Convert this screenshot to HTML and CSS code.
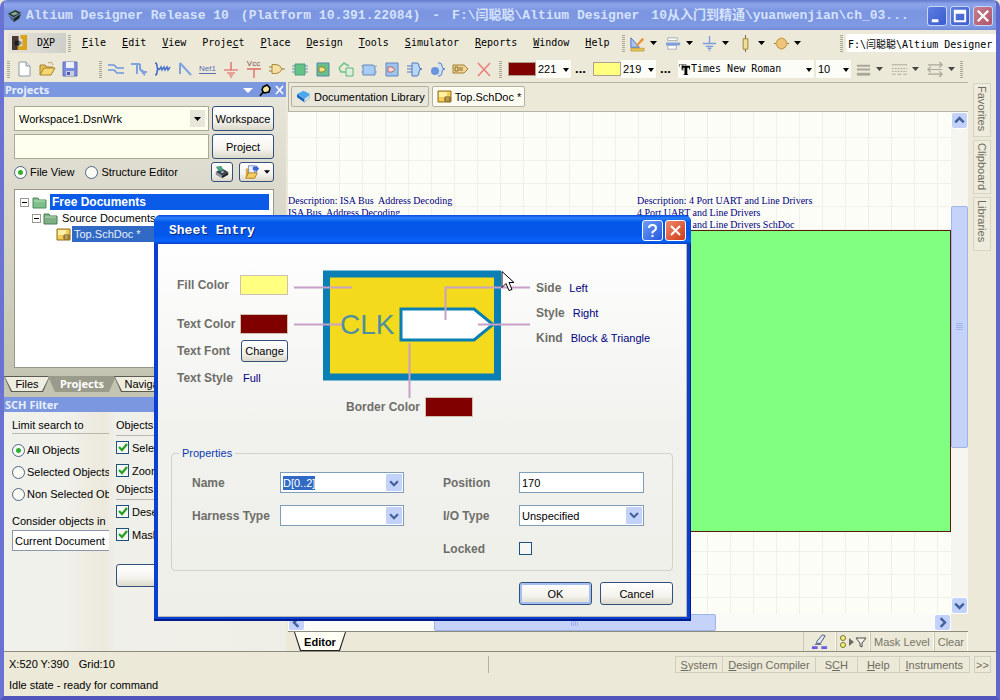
FILE: index.html
```html
<!DOCTYPE html>
<html lang="en">
<head>
<meta charset="utf-8">
<title>Altium Designer Release 10</title>
<link rel="stylesheet" href="styles.css">
</head>
<body>
<div class="window">
  <header class="titlebar">
    <svg class="app-icon" viewBox="0 0 16 16"><path d="M1 5l8-4 6 3-8 5z" fill="#2b3a2c"/><path d="M4 5l5-2 3 2-5 2z" fill="#7fae9c"/><path d="M1 6l6 4-1 3z" fill="#46607a"/><path d="M7 10l8-5-2 5-6 4z" fill="#1d2a20"/></svg>
    <h1 class="title-text"><span>Altium Designer Release 10</span><span>(Platform 10.391.22084)</span><span>-</span><span>F:\闫聪聪\Altium Designer</span><span>10从入门到精通\yuanwenjian\ch_03...</span></h1>
    <div class="caption-buttons">
      <button class="cap" aria-label="Minimize"><svg viewBox="0 0 19 19"><path d="M4 13h7v3H4z" fill="#fff"/></svg></button>
      <button class="cap" aria-label="Maximize"><svg viewBox="0 0 19 19"><path d="M3 3h13v13H3zM5 7h9v7H5z" fill="#fff" fill-rule="evenodd"/></svg></button>
      <button class="cap cap-close" aria-label="Close"><svg viewBox="0 0 19 19"><path d="M4 4l11 11M15 4L4 15" stroke="#fff" stroke-width="2.400"/></svg></button>
    </div>
  </header>

  <nav class="menubar">
    <button class="dxp"><svg viewBox="0 0 17 17"><path d="M0 1h7v15H0z" fill="#4a3a34"/><path d="M9 0h7v16H6v-4h5V4H9z" fill="#d8a41c"/><path d="M3 6h5v5H3z" fill="#1b1b1b"/><path d="M7 7h3v3H7z" fill="#777"/></svg><span>D<u>X</u>P</span></button>
    <i class="grip"></i>
    <div class="menus">
      <button><u>F</u>ile</button><button><u>E</u>dit</button><button><u>V</u>iew</button><button>Proje<u>c</u>t</button><button><u>P</u>lace</button><button><u>D</u>esign</button><button><u>T</u>ools</button><button><u>S</u>imulator</button><button><u>R</u>eports</button><button><u>W</u>indow</button><button><u>H</u>elp</button>
    </div>
    <i class="grip"></i>
    <div class="menu-tools">
      <button class="drop-tool" aria-label="Drawing tools"><svg viewBox="0 0 18 18"><path d="M2 3l9 10H2z" fill="#a9c4ef" stroke="#4a72bd"/><path d="M7 11l7-8 2 2-7 7z" fill="#e8963a"/><path d="M2 14h14v3H2z" fill="#e9c74f" stroke="#a8862a" stroke-width=".6"/></svg></button>
      <button class="drop-tool" aria-label="Align"><svg viewBox="0 0 18 18"><path d="M3 3h10v3H3zM3 11h9v4H3z" fill="#fff" stroke="#a3a8b4"/><path d="M1 8h15v3H1z" fill="#7f9fdd"/></svg></button>
      <button class="drop-tool" aria-label="Power sources"><svg viewBox="0 0 18 18"><path d="M9 1v8M2 9h14M5 12h8M7 14h4M8 16h2" stroke="#7b9ddd" fill="none" stroke-width="1.400"/></svg></button>
      <button class="drop-tool" aria-label="Digital devices"><svg viewBox="0 0 18 18"><path d="M9 0v18" stroke="#6c6146"/><path d="M6.500 4h5v11h-5z" fill="#efdf9e" stroke="#9b8135"/></svg></button>
      <button class="drop-tool" aria-label="Simulation sources"><svg viewBox="0 0 18 18"><path d="M1 9h16" stroke="#7d6a3d"/><path d="M9 3l4 2 2 4-2 4-4 2-4-2-2-4 2-4z" fill="#f0c478" stroke="#b98a38"/></svg></button>
    </div>
    <i class="grip"></i>
    <input class="path" aria-label="Document path" value="F:\闫聪聪\Altium Designer">
  </nav>

  <div class="toolbar">
    <i class="grip"></i>
    <div class="tools">
      <button aria-label="New"><svg viewBox="0 0 18 18"><path d="M4 2h7l4 4v10H4z" fill="#fff" stroke="#8e97aa"/><path d="M11 2v4h4" fill="#dde3f0" stroke="#8e97aa"/></svg></button>
      <button aria-label="Open"><svg viewBox="0 0 18 18"><path d="M2 15V5h5l2 2h6v2" fill="#e6bf52" stroke="#a8842f"/><path d="M2 15l4-7h11l-4 7z" fill="#f6d774" stroke="#a8842f"/><path d="M10 3q4-2 5 2" fill="none" stroke="#b99e66"/></svg></button>
      <button aria-label="Save"><svg viewBox="0 0 18 18"><path d="M2 2h14v14H2z" fill="#7a8be0" stroke="#6070bc"/><path d="M5 2h8v6H5z" fill="#eef1fb"/><path d="M5 11h8v5H5z" fill="#c9cfe3"/><path d="M6 12h3v3H6z" fill="#4f5ca4"/></svg></button>
    </div>
    <i class="grip grip-far"></i>
    <div class="tools">
      <button aria-label="Wire"><svg viewBox="0 0 18 18"><path d="M1 5h6l3 3h7M1 10h6l3 3h7" fill="none" stroke="#6f97de" stroke-width="1.700"/></svg></button>
      <button aria-label="Bus"><svg viewBox="0 0 18 18"><path d="M1 4h9M7 4v10M10 4v5l4 3h3M10 9l5 6" fill="none" stroke="#7fa2e0" stroke-width="2"/></svg></button>
      <button aria-label="Signal harness"><svg viewBox="0 0 18 18"><path d="M2 3q2 0 2 3 0 3 2 3-2 0-2 3 0 3-2 3" fill="none" stroke="#3f66c4" stroke-width="1.500"/><path d="M6 10l2-3 1 3 2-3 1 3 2-3 1 3 2-3" fill="none" stroke="#4b74cc" stroke-width="1.500"/></svg></button>
      <button aria-label="Bus entry"><svg viewBox="0 0 18 18"><path d="M4 3v11M4 3l11 12" fill="none" stroke="#7fa2e0" stroke-width="2"/></svg></button>
      <button aria-label="Net label" class="tool-text"><span class="net-label">Net1</span></button>
      <button aria-label="Ground"><svg viewBox="0 0 18 18"><path d="M9 2v8M2 10h14M5 13h8M7 15h4M8 17h2" stroke="#dd5a50" stroke-width="1.200"/></svg></button>
      <button aria-label="VCC power port" class="tool-text"><span class="vcc-label">Vcc</span><svg class="vcc-stem" viewBox="0 0 18 10"><path d="M2 1h14M9 1v9" stroke="#dd6a60" stroke-width="1.300"/></svg></button>
      <button aria-label="Part"><svg viewBox="0 0 18 18"><path d="M1 7h4M1 11h4M13 9h4" stroke="#9a8038"/><path d="M4 4.500h4q4 0 6 4.500-2 4.500-6 4.500H4z" fill="#f4dfa0" stroke="#a88a42"/></svg></button>
      <button aria-label="Sheet symbol"><svg viewBox="0 0 18 18"><path d="M1 6h16M1 9h16M1 12h16" stroke="#6a8fc0"/><path d="M4 4h10v11H4z" fill="#63c285" stroke="#4e9c82"/></svg></button>
      <button aria-label="Sheet entry"><svg viewBox="0 0 18 18"><path d="M3 3h12v13H3z" fill="#67c089" stroke="#5685ab"/><path d="M5 7h4l3 2.500-3 2.500H5z" fill="#f5e27c" stroke="#8f8136"/></svg></button>
      <button aria-label="Device sheet"><svg viewBox="0 0 18 18"><path d="M9 8h7v8H9z" fill="#d8f0dc" stroke="#5db67b"/><path d="M2 8l5-5 5 3M2 8l2 4h5" fill="none" stroke="#6cc48a" stroke-width="1.600"/></svg></button>
      <button aria-label="Harness connector"><svg viewBox="0 0 18 18"><path d="M1 6h16M1 12h16" stroke="#8aa9da"/><path d="M3 5h10l2 2v8H3z" fill="#a9cdf2" stroke="#6286bf"/></svg></button>
      <button aria-label="Harness entry"><svg viewBox="0 0 18 18"><path d="M3 3h12v13H3z" fill="#9cc4ef" stroke="#6286bf"/><path d="M5 7h4l3 2.500-3 2.500H5z" fill="#f7dcd6" stroke="#c06060"/></svg></button>
      <button aria-label="Harness"><svg viewBox="0 0 18 18"><path d="M1 6h5M1 9h5M1 12h5" stroke="#5077c0"/><path d="M6 3h5q2 0 2 3 0 3 3 3-3 0-3 3 0 4-2 4H6z" fill="#b8d6f6" stroke="#5077c0"/></svg></button>
      <button aria-label="Harness port"><svg viewBox="0 0 18 18"><path d="M9 3h2q2 0 2 3 0 3 3 3-3 0-3 3 0 4-2 4H9" fill="#cfe2f8" stroke="#5c80c4"/><circle cx="6" cy="11" r="4" fill="#6a94dc"/></svg></button>
      <button aria-label="Port"><svg viewBox="0 0 18 18"><path d="M1 5h11l4 4-4 4H1z" fill="#f2d592" stroke="#a07e34"/><path d="M3 7h3v4H3zM8 7v4M10 7v4" fill="none" stroke="#8a6c30"/></svg></button>
      <button aria-label="No ERC"><svg viewBox="0 0 18 18"><path d="M3 3l12 13M15 3L3 16" stroke="#ef7d78" stroke-width="1.500"/></svg></button>
    </div>
    <i class="grip grip-near"></i>
    <span class="color-pick"><i class="chip maroon"></i><select class="num" aria-label="Line color"><option>221</option></select><button class="dots" aria-label="More line colors">...</button></span>
    <span class="color-pick"><i class="chip yellow"></i><select class="num" aria-label="Fill color"><option>219</option></select><button class="dots" aria-label="More fill colors">...</button></span>
    <span class="font-pick"><svg viewBox="0 0 14 14" class="tt"><path d="M1 1h8v3H8V2H6v6H4V2H2v2H1z" fill="#777"/><path d="M4 3h9v4h-1V5H10v7h1v1H6v-1h1V5H5v2H4z" fill="#000"/></svg><select class="font-name" aria-label="Font"><option>Times New Roman</option></select></span>
    <select class="font-size" aria-label="Font size"><option>10</option></select>
    <div class="menu-tools disabled-tools">
      <button class="drop-tool" aria-label="Line width"><svg viewBox="0 0 18 18"><path d="M2 5h14M2 9h14" stroke="#8d8c80" stroke-width="2"/><path d="M2 14h14" stroke="#8d8c80" stroke-width="3"/></svg></button>
      <button class="drop-tool" aria-label="Line style"><svg viewBox="0 0 18 18"><path d="M1 4h16" stroke="#8d8c80"/><path d="M1 8h16M1 11h16" stroke="#8d8c80" stroke-dasharray="2 1"/><path d="M1 14h16" stroke="#8d8c80" stroke-dasharray="4 2"/></svg></button>
      <button class="drop-tool" aria-label="Arrow style"><svg viewBox="0 0 18 18"><path d="M1 4h15M13 1l3 3-3 3M16 9H1M4 6L1 9l3 3M1 14h15M13 11l3 3-3 3" fill="none" stroke="#8d8c80" stroke-width="1.300"/></svg></button>
    </div>
    <i class="grip"></i>
  </div>

  <main class="workspace">
    <aside class="left">
      <section class="projects">
        <h2 class="panel-head"><span>Projects</span>
          <svg class="panel-icons" viewBox="0 0 42 14"><path d="M1 5h10l-5 5z" fill="#fff"/><path d="M21 4l4-2 3 3-1 4-5 1-2-3zM21 9l-3 4" fill="#f3e9a0" stroke="#000" stroke-width="1.500"/><path d="M34 3l7 8M41 3l-7 8" stroke="#fff" stroke-width="1.600"/></svg>
        </h2>
        <div class="projects-body">
          <div class="pick-row"><select class="ws-select" aria-label="Workspace"><option>Workspace1.DsnWrk</option></select><button class="xp-btn">Workspace</button></div>
          <div class="pick-row"><input class="ws-input" aria-label="Project" value=""><button class="xp-btn">Project</button></div>
          <div class="view-row">
            <label><input type="radio" name="view" checked>File View</label>
            <label class="grow"><input type="radio" name="view">Structure Editor</label>
            <button class="xp-btn small" aria-label="Refresh"><svg viewBox="0 0 18 18"><path d="M2 9l7-4 7 4-7 4z" fill="#3b4047"/><path d="M2 9v3l7 4v-3z" fill="#8a919b"/><path d="M16 9v3l-7 4v-3z" fill="#20242a"/><path d="M2 3l3 5 6-1-3-5z" fill="#4ea284"/><path d="M7 9l3-1 2 1-3 1z" fill="#a9d6e8"/></svg></button>
            <button class="xp-btn wide" aria-label="Open project"><svg viewBox="0 0 18 18"><path d="M2 5h4v10H2z" fill="#e3a935"/><path d="M5 2h7v9H5z" fill="#e8f0ff" stroke="#6e86bb"/><path d="M10 3h3V1l4 4-4 5V7h-3z" fill="#3d63d4"/><path d="M2 16l3-6h10l-3 6z" fill="#f5ce62" stroke="#a87c20"/></svg><svg class="tri" viewBox="0 0 7 4"><path d="M0 0h7L3.500 4z"/></svg></button>
          </div>
          <ul class="tree">
            <li class="node sel-strong"><i class="minus"></i><svg viewBox="0 0 15 13"><path d="M1 2h5l1 2h7v8H1z" fill="#7fc08a" stroke="#518a62"/><path d="M2 5h11" stroke="#b9e4bf"/></svg><b>Free Documents</b></li>
            <li class="node lvl1"><i class="minus"></i><svg viewBox="0 0 15 13"><path d="M1 2h5l1 2h7v8H1z" fill="#7fb083" stroke="#4b7a58"/><path d="M2 5h11" stroke="#b9dcbb"/></svg><span>Source Documents</span></li>
            <li class="node lvl2"><svg viewBox="0 0 15 13"><path d="M1 1h13v11H1z" fill="#f5cf55" stroke="#8d6a1e"/><path d="M2 2h8v5H2z" fill="#fff0a8"/><path d="M8 7h5v4H8zM8 9h5" fill="#fbe391" stroke="#6e5218"/></svg><span>Top.SchDoc *</span></li>
          </ul>
        </div>
        <div class="ptabs">
          <button class="ptab">Files</button><button class="ptab active">Projects</button><button class="ptab">Navigator</button>
        </div>
      </section>
      <section class="filter">
        <h2 class="panel-head"><span>SCH Filter</span></h2>
        <div class="filter-body">
          <div class="fcol">
            <h3>Limit search to</h3>
            <label><input type="radio" name="limit" checked>All Objects</label>
            <label><input type="radio" name="limit">Selected Objects</label>
            <label><input type="radio" name="limit">Non Selected Ob</label>
            <label class="consider" for="consider">Consider objects in</label>
            <input id="consider" class="consider-box" value="Current Document">
          </div>
          <div class="fcol">
            <h3>Objects</h3>
            <label><input type="checkbox" checked>Select</label>
            <label><input type="checkbox" checked>Zoom</label>
            <h3>Objects</h3>
            <label><input type="checkbox" checked>Deselect</label>
            <label><input type="checkbox" checked>Mask</label>
            <button class="xp-btn apply" aria-label="Apply"></button>
          </div>
        </div>
      </section>
    </aside>

    <section class="docs">
      <div class="doc-tabs">
        <button class="doc-tab"><svg viewBox="0 0 18 16"><path d="M1 5l8-4 8 4-6 6z" fill="#4aa8ee"/><path d="M1 5v4l9 6v-4z" fill="#1565c0"/><path d="M10 11l6-5v4l-6 5z" fill="#dcecf8" stroke="#3c78b8" stroke-width=".5"/></svg>Documentation Library</button>
        <button class="doc-tab active"><svg viewBox="0 0 15 13"><path d="M1 1h13v11H1z" fill="#f5cf55" stroke="#8d6a1e"/><path d="M2 2h8v5H2z" fill="#fff0a8"/><path d="M8 7h5v4H8zM8 9h5" fill="#fbe391" stroke="#6e5218"/></svg>Top.SchDoc *</button>
      </div>
      <div class="view">
        <div class="canvas">
          <p class="note note-isa">Description: ISA Bus&nbsp; Address Decoding<br>ISA Bus&nbsp; Address Decoding</p>
          <p class="note note-uart">Description: 4 Port UART and Line Drivers<br>4 Port UART and Line Drivers<br>4 Port UART and Line Drivers SchDoc</p>
          <div class="symbol"></div>
        </div>
        <div class="vscroll">
          <button class="sb" aria-label="Scroll up"><svg viewBox="0 0 9 9"><path d="M1 6l3.500-3.500L8 6" fill="none" stroke="#43619c" stroke-width="2"/></svg></button>
          <div class="track"><i class="space-a"></i><i class="thumb"></i><i class="space-b"></i></div>
          <button class="sb" aria-label="Scroll down"><svg viewBox="0 0 9 9"><path d="M1 3l3.500 3.500L8 3" fill="none" stroke="#43619c" stroke-width="2"/></svg></button>
        </div>
        <div class="hscroll">
          <button class="sb" aria-label="Scroll left"><svg viewBox="0 0 9 9"><path d="M6 1L2.500 4.500 6 8" fill="none" stroke="#43619c" stroke-width="2"/></svg></button>
          <div class="track"><i class="space-a"></i><i class="thumb"></i><i class="space-b"></i></div>
          <button class="sb" aria-label="Scroll right"><svg viewBox="0 0 9 9"><path d="M3 1l3.500 3.500L3 8" fill="none" stroke="#43619c" stroke-width="2"/></svg></button>
        </div>
      </div>
      <div class="doc-foot">
        <button class="editor-tab">Editor</button>
        <div class="foot-tools">
          <button aria-label="Highlight"><svg viewBox="0 0 18 18"><path d="M6 9l6-7 3 1-5 8H6z" fill="#dfe6f6" stroke="#4c5672"/><path d="M1 14h6v3H1zM11 14h6v3h-6z" fill="#6a5be0"/><path d="M4 12h7" stroke="#4c5672"/></svg></button>
          <button aria-label="Filter" class="filter-btn"><svg viewBox="0 0 28 18"><circle cx="4" cy="5" r="2.500" fill="#f6f27a" stroke="#76762e"/><circle cx="4" cy="12" r="2.500" fill="#f6f27a" stroke="#76762e"/><path d="M10 5l5 4-5 4z" fill="#6d6d66"/><path d="M17 5h10l-4 5v4l-2-1v-3z" fill="#f4f4ec" stroke="#4c4c46"/></svg></button>
          <button>Mask Level</button>
          <button>Clear</button>
        </div>
      </div>
    </section>

    <nav class="side-tabs"><button>Favorites</button><button>Clipboard</button><button>Libraries</button></nav>
  </main>

  <footer class="status">
    <div class="status-row">
      <div class="coords"><span>X:520 Y:390</span><span>Grid:10</span></div>
      <div class="status-btns"><button><u>S</u>ystem</button><button><u>D</u>esign Compiler</button><button>S<u>C</u>H</button><button><u>H</u>elp</button><button><u>I</u>nstruments</button></div>
      <button class="more">&gt;&gt;</button>
    </div>
    <p class="idle">Idle state - ready for command</p>
  </footer>
</div>

<div class="dialog" role="dialog" aria-labelledby="dlg-title">
  <div class="dlg-title"><h2 id="dlg-title">Sheet Entry</h2>
    <button class="dlg-cap" aria-label="Help"><svg viewBox="0 0 19 19"><path d="M6 7q0-3 3.500-3T13 7q0 2-3.500 4v1.500" fill="none" stroke="#fff" stroke-width="2"/><path d="M8.500 14h2v2h-2z" fill="#fff"/></svg></button>
    <button class="dlg-cap dlg-close" aria-label="Close"><svg viewBox="0 0 19 19"><path d="M5 5l9 9M14 5l-9 9" stroke="#fff" stroke-width="2"/></svg></button>
  </div>
  <div class="dlg-body">
    <div class="visual">
      <div class="vleft">
        <div class="vrow"><span>Fill Color</span><button class="swatch yellow" aria-label="Fill color"></button></div>
        <div class="vrow spaced"><span>Text Color</span><button class="swatch maroon" aria-label="Text color"></button></div>
        <div class="vrow"><span>Text Font</span><button class="xp-btn change">Change</button></div>
        <div class="vrow"><span>Text Style</span><a class="val" href="#">Full</a></div>
      </div>
      <div class="vmid">
        <svg class="diagram" viewBox="0 0 236 130">
          <rect x="32.500" y="4" width="171" height="103" fill="#f3da1c" stroke="#0a7fb4" stroke-width="7"/>
          <text x="46" y="64" class="clk">CLK</text>
          <path d="M107 39h73l19 15.500L180 70h-73z" fill="#fff" stroke="#0a7fb4" stroke-width="3"/>
          <path d="M0 17.500h58M0 54.500h48M115.500 73v55M151.500 50V17.500H236M184 54.500h52" fill="none" stroke="#c8a0c8" stroke-width="2"/>
        </svg>
        <div class="border-row"><span>Border Color</span><button class="swatch maroon" aria-label="Border color"></button></div>
      </div>
      <div class="vright">
        <div class="prop"><span>Side</span><a class="val" href="#">Left</a></div>
        <div class="prop"><span>Style</span><a class="val" href="#">Right</a></div>
        <div class="prop"><span>Kind</span><a class="val" href="#">Block &amp; Triangle</a></div>
      </div>
    </div>
    <fieldset class="props">
      <legend>Properties</legend>
      <div class="grid">
        <label for="name">Name</label>
        <div class="combo"><input id="name" value="D[0..2]" autofocus><button aria-label="Show names"><svg viewBox="0 0 9 9"><path d="M1 3l3.500 3.500L8 3" fill="none" stroke="#43619c" stroke-width="2"/></svg></button></div>
        <label for="pos">Position</label>
        <input id="pos" class="field" value="170">
        <label for="harness">Harness Type</label>
        <div class="combo"><input id="harness" value=""><button aria-label="Show harness types"><svg viewBox="0 0 9 9"><path d="M1 3l3.500 3.500L8 3" fill="none" stroke="#43619c" stroke-width="2"/></svg></button></div>
        <label for="io">I/O Type</label>
        <select id="io" class="field io"><option>Unspecified</option></select>
        <label for="locked">Locked</label>
        <input id="locked" type="checkbox">
      </div>
    </fieldset>
    <div class="dlg-actions"><button class="xp-btn default">OK</button><button class="xp-btn">Cancel</button></div>
  </div>
</div>
<svg class="pointer" viewBox="0 0 14 21"><path d="M1 1v16l4-4 3 7 3-1-3-7h5z" fill="#fff" stroke="#000"/></svg>
<script src="main.js"></script>
</body>
</html>
```
FILE: main.js
```js
const nameBox = document.getElementById("name");
nameBox.focus();
nameBox.select();
```
FILE: styles.css
```css
:root {
  --face: #ece9d8;
  --ui: "Liberation Sans", "Noto Sans CJK SC", sans-serif;
  --mono: "Liberation Mono", "Noto Sans CJK SC", monospace;
  --menu: "DejaVu Sans Mono", "Noto Sans CJK SC", monospace;
  --arrow: url("data:image/svg+xml,%3Csvg xmlns='http://www.w3.org/2000/svg' width='7' height='4'%3E%3Cpath d='M0 0h7L3.500 4z'/%3E%3C/svg%3E");
  --chevron: url("data:image/svg+xml,%3Csvg xmlns='http://www.w3.org/2000/svg' width='16' height='17'%3E%3Crect width='16' height='17' rx='1' fill='%23c3d2f8'/%3E%3Cpath d='M4 6l4 4 4-4' fill='none' stroke='%2343619c' stroke-width='2'/%3E%3C/svg%3E");
  --tick: url("data:image/svg+xml,%3Csvg xmlns='http://www.w3.org/2000/svg' width='11' height='11'%3E%3Cpath d='M2 5l3 3 5-6' fill='none' stroke='%2321a121' stroke-width='2.200'/%3E%3C/svg%3E");
}
* { box-sizing: border-box; }
body { margin: 0; font: 11px/14px var(--ui); color: #000; background: var(--face); }
button, input, select { font: inherit; color: inherit; margin: 0; padding: 0; border: 0; background: none; border-radius: 0; outline: 0; }
select { appearance: none; }
svg { display: block; flex: none; }
h1, h2, h3, p, ul { margin: 0; padding: 0; font-size: inherit; list-style: none; }

.window { min-height: 100vh; display: flex; flex-direction: column; background: var(--face); border: 4px solid #6a72d2; border-top: 0; border-right-color: #5f66cc; border-bottom-color: #5255bb; border-radius: 7px 7px 0 0; overflow: hidden; }

/* Title bar */
.titlebar { height: 30px; margin: 0 -4px; padding: 2px 7px 0 7px; display: flex; align-items: center; gap: 4px; background: linear-gradient(#6379cc, #8ba4ea 4px, #7b94e0 12px, #7f9ae4 26px, #7289d8); }
.app-icon { width: 15px; height: 15px; }
.title-text { flex: 1; min-width: 0; display: flex; gap: 12px; overflow: hidden; white-space: nowrap; font: bold 13px/20px var(--mono); color: #d5e2fb; }
.caption-buttons { display: flex; gap: 3px; }
.cap, .dlg-cap { width: 20px; height: 20px; border: 1px solid #c8d6f8; border-radius: 3px; background: linear-gradient(135deg, #5c7de0, #3a5cd0); }
.cap svg, .dlg-cap svg { width: 18px; height: 18px; }
.cap-close { background: linear-gradient(135deg, #c47f90, #b35468); }

/* Menu and tool bars */
.menubar { height: 26px; padding-left: 4px; display: flex; align-items: center; font: 10px/14px var(--menu); overflow: hidden; }
.dxp { width: 58px; height: 20px; padding-left: 4px; display: flex; align-items: center; gap: 9px; background: linear-gradient(90deg, #e4e2da, #cfcfca); }
.dxp svg { width: 16px; height: 16px; }
.grip { flex: none; width: 3px; height: 17px; margin-left: 2px; background: repeating-linear-gradient(#a9a796 0 1px, transparent 1px 2px); }
.menus { flex: none; display: flex; gap: 16px; padding: 0 11px 0 11px; }
.menu-tools { display: flex; gap: 1px; }
.drop-tool { width: 35px; height: 20px; padding-left: 4px; background: var(--arrow) no-repeat 25px 8px; background-size: 7px 4px; }
.drop-tool svg { width: 17px; height: 17px; }
.disabled-tools { opacity: .7; }
.menubar .menu-tools { flex: 1; }
.path { width: 150px; height: 18px; margin-left: 3px; padding-left: 2px; background: #fff; }

.toolbar { height: 26px; padding-left: 1px; display: flex; align-items: center; overflow: hidden; }
.tools { flex: none; display: flex; margin-left: 2px; }
.tools button { width: 23px; height: 20px; display: grid; place-items: center; }
.tools svg { width: 18px; height: 18px; }
.grip-far { margin-left: 18px; }
.grip-near { margin-left: 4px; }
.tools .tool-text { font: 8px/8px var(--ui); align-content: center; }
.net-label { color: #5a6db0; border-bottom: 1px solid #5a6db0; }
.vcc-label { color: #80504a; }
.tools .vcc-stem { width: 18px; height: 10px; }
.color-pick { display: flex; align-items: center; margin-left: 3px; flex: none; }
.grip-near + .color-pick { margin-left: 6px; }
.chip { width: 28px; height: 14px; border: 1px solid #b0a090; }
.maroon { background: #800000; }
.yellow { background: #ffff80; }
.num { width: 35px; height: 18px; padding-left: 2px; background: #fdfdf8 var(--arrow) no-repeat 27px 8px; background-size: 6px 4px; }
.dots { width: 19px; font-weight: bold; font-size: 13px; }
.font-pick { display: flex; align-items: center; flex: none; margin-left: 3px; background: #fdfdf8; }
.tt { width: 13px; height: 13px; }
.font-name { width: 123px; height: 18px; font: 10px/14px var(--menu); background: #fdfdf8 var(--arrow) no-repeat 115px 8px; background-size: 6px 4px; }
.font-size { width: 35px; height: 18px; margin: 0 0 0 2px; flex: none; padding-left: 2px; background: #fdfdf8 var(--arrow) no-repeat 27px 8px; background-size: 6px 4px; }

/* Workspace */
.workspace { flex: 1; display: grid; grid-template-columns: 282px minmax(0, 1fr) 26px; column-gap: 2px; border-bottom: 1px solid #8c8b7e; }
.left { display: flex; flex-direction: column; min-width: 0; }
.panel-head { height: 15px; padding: 0 2px 0 1px; display: flex; align-items: center; justify-content: space-between; background: #7b97e0; color: #e8effd; font: bold 11px/14px "Noto Sans", sans-serif; }
.panel-icons { width: 42px; height: 14px; }
.projects { display: flex; flex-direction: column; height: 315px; }
.projects-body { flex: 1; min-height: 0; display: flex; flex-direction: column; padding: 9px 12px 8px 10px; background: linear-gradient(#e7e5d9, #c4c4b2); }
.pick-row { display: flex; gap: 3px; height: 25px; margin-bottom: 3px; }
.ws-select, .ws-input { flex: 1; min-width: 0; padding-left: 4px; border: 1px solid #a9a892; background: #fffff0; }
.ws-select { background: var(--arrow) no-repeat right 7px center, linear-gradient(#e8e6da, #e8e6da) no-repeat right 3px center / 15px 17px, #fffff0; }
.xp-btn { border: 1px solid #33507c; border-radius: 3px; background: linear-gradient(#fff, #f4f3ee 60%, #dcd9ca); text-align: center; }
.pick-row .xp-btn { width: 62px; }
.view-row { display: flex; align-items: center; height: 20px; gap: 6px; }
.view-row label { display: flex; align-items: center; gap: 3px; margin-right: 5px; white-space: nowrap; }
.view-row .grow { flex: 1; margin: 0; }
.small, .wide { height: 20px; display: flex; align-items: center; justify-content: center; gap: 4px; }
.small { width: 22px; }
.wide { width: 35px; }
.small svg, .wide svg { width: 16px; height: 16px; }
.wide .tri { width: 6px; height: 4px; }
input[type="radio"] { appearance: none; flex: none; width: 13px; height: 13px; border: 1px solid #4b6684; border-radius: 50%; background: #fbfbf6; }
input[type="radio"]:checked { background: radial-gradient(circle, #2fae2f 0 2px, #fbfbf6 3px); }
input[type="checkbox"] { appearance: none; flex: none; width: 13px; height: 13px; border: 1px solid #1c5180; background: #f6f6f2; }
input[type="checkbox"]:checked { background: #f6f6f2 var(--tick); }

.tree { flex: 1; margin-top: 7px; padding: 4px; border: 1px solid #97978a; background: #fff; }
.node { display: flex; align-items: center; height: 16px; padding-left: 1px; gap: 3px; white-space: nowrap; }
.node svg { width: 15px; height: 13px; }
.minus { width: 9px; height: 9px; border: 1px solid #9a9a90; background: linear-gradient(#000, #000) no-repeat center / 5px 1px, #fff; }
.node b, .node span { padding: 0 2px; line-height: 16px; }
.sel-strong b { flex: 1; background: #0a5be8; color: #fff; font-size: 12px; }
.lvl1 { padding-left: 13px; gap: 2px; }
.lvl2 { padding-left: 37px; gap: 1px; }
.lvl2 span { width: 110px; background: #316ac5; color: #e7eefb; }

.ptabs { display: flex; height: 21px; padding-bottom: 5px; background: #c4c4b2; }
.ptab { position: relative; z-index: 0; width: 46px; height: 16px; margin-right: -2px; }
.ptab::before, .ptab::after { content: ""; position: absolute; z-index: -1; inset: 0; background: #5a5a50; clip-path: polygon(0 0, 100% 0, calc(100% - 7px) 100%, 7px 100%); }
.ptab::after { inset: 1px; background: #efeddf; }
.ptab.active { width: 68px; color: #fff; font: bold 11px/14px "Noto Sans", sans-serif; }
.ptab.active::before, .ptab.active::after { background: #9b9b8c; }
.ptab:last-child { width: 68px; }

.filter { flex: 1; display: flex; flex-direction: column; }
.filter-body { flex: 1; display: grid; grid-template-columns: 97px 1fr; column-gap: 7px; padding: 6px 8px; background: linear-gradient(90deg, #f1f1ec 0 60px, #ece9dc 100px, #f0f0ea 112px, #efeee6); }
.fcol { display: flex; flex-direction: column; overflow: hidden; white-space: nowrap; }
.fcol h3 { height: 16px; margin-bottom: 5px; border-bottom: 1px solid #b9b8ab; font-weight: normal; }
.fcol label { display: flex; align-items: center; gap: 2px; height: 22px; flex: none; }
.fcol + .fcol h3 { margin-bottom: 0; height: 18px; flex: none; }
.fcol + .fcol label { height: 23px; gap: 3px; }
.fcol .consider { height: 19px; margin-top: 6px; }
.consider-box { height: 21px; width: 110px; flex: none; padding-left: 2px; border: 1px solid #8a98a8; background: #fff; }
.apply { width: 120px; height: 23px; margin-top: 18px; }

.docs { display: flex; flex-direction: column; min-width: 0; }
.doc-tabs { height: 30px; padding: 3px 2px 4px; display: flex; gap: 3px; align-items: stretch; border: 1px solid #b4b3a5; border-right: 0; }
.doc-tab { display: flex; align-items: center; gap: 3px; padding: 0 3px 0 4px; border: 1px solid #b2b0a0; border-radius: 2px; background: #e9e7da; }
.doc-tab svg { width: 15px; height: 13px; }
.doc-tab.active { background: #fdfcf3; }
.view { flex: 1; display: grid; grid-template: minmax(0, 1fr) 17px / minmax(0, 1fr) 17px; }
.canvas { position: relative; overflow: hidden; background: repeating-linear-gradient(90deg, transparent 0 22px, #f1f0e8 22px 23px) 6px 0, repeating-linear-gradient(#fdfdf7 0 22px, #f1f0e8 22px 23px) 0 3px; }
.note { position: absolute; font: 10px/12px "Liberation Serif", serif; color: #000080; white-space: nowrap; }
.note-isa { left: 0; top: 83px; }
.note-uart { left: 349px; top: 83px; }
.symbol { position: absolute; left: 349px; right: 0; top: 118px; height: 302px; background: #80ff80; border: 1px solid #5a1a08; }
.sb { width: 17px; height: 17px; flex: none; display: grid; place-items: center; border: 1px solid #fff; border-radius: 3px; background: #c3d2fa; }
.sb svg { width: 11px; height: 11px; }
.vscroll { display: flex; flex-direction: column; background: #f6f5f0; }
.hscroll { display: flex; background: #fafaf7; }
.track { flex: 1; display: flex; min-width: 0; }
.vscroll .track { flex-direction: column; }
.thumb { border-radius: 2px; border: 1px solid #9fb4ea; background: #c5d3fb; }
.vscroll .space-a { flex: 78; }
.vscroll .thumb { flex: 242; background: repeating-linear-gradient(#9db3ec 0 1px, transparent 1px 2px) no-repeat center / 7px 8px, #c5d3fb; }
.vscroll .space-b { flex: 150; }
.hscroll .space-a { flex: 130; }
.hscroll .thumb { flex: 281; background: repeating-linear-gradient(90deg, #9db3ec 0 1px, transparent 1px 2px) no-repeat center / 8px 7px, #c5d3fb; }
.hscroll .space-b { flex: 219; }
.doc-foot { height: 20px; display: flex; justify-content: space-between; border-top: 1px solid #8c8b7e; }
.editor-tab { position: relative; z-index: 0; width: 52px; height: 19px; margin-left: 6px; font-size: 11px; font-weight: bold; }
.editor-tab::before, .editor-tab::after { content: ""; position: absolute; z-index: -1; inset: 0; background: #222; clip-path: polygon(0 0, 100% 0, calc(100% - 6px) 100%, 6px 100%); }
.editor-tab::after { inset: 0 1px 1px; background: #fffff6; }
.foot-tools { display: flex; color: #76756a; }
.foot-tools button { padding: 0 3px; border-left: 1px solid #c9c7b6; border-right: 1px solid #fbfaf2; }
.foot-tools svg { width: 17px; height: 17px; margin: 0 4px; }
.foot-tools .filter-btn { padding: 0 1px; }
.foot-tools .filter-btn svg { width: 28px; height: 18px; margin: 0 1px; }

.side-tabs { display: flex; flex-direction: column; gap: 3px; padding: 1px 5px 0 3px; }
.side-tabs button { writing-mode: vertical-rl; width: 18px; height: 54px; padding-top: 2px; text-align: left; color: #6c6b60; border: 1px solid #d6d4c5; background: #efecdd; }

/* Status */
.status { height: 44px; padding: 4px 5px 0 5px; }
.status-row { display: flex; align-items: stretch; height: 17px; }
.coords { flex: 1; display: flex; gap: 10px; line-height: 17px; margin-right: 186px; border-right: 1px solid #b4b2a3; }
.status-btns { display: flex; border: 1px solid #d0cebe; color: #6c6b60; }
.status-btns button { padding: 0 5px; border-right: 1px solid #d0cebe; }
.status-btns button:nth-child(3), .status-btns button:nth-child(4) { padding: 0 9px; }
.status-btns button:last-child { padding: 0 6px; border: 0; }
.more { width: 17px; margin-left: 4px; border: 1px solid #d0cebe; color: #6c6b60; }
.idle { padding-top: 5px; }

/* Sheet Entry dialog */
.dialog { position: absolute; left: 154px; top: 215px; width: 537px; padding: 0 4px 4px; border-radius: 7px 7px 0 0; background: #0a3fd2; box-shadow: inset 0 -2px #001c8c, inset -1px 0 #001c8c; }
.dlg-title { height: 29px; margin: 0 -4px; padding: 2px 5px 0 15px; display: flex; align-items: center; gap: 2px; border-radius: 7px 7px 0 0; background: linear-gradient(#0a4ae0, #2b80fb 3px, #0458e8 7px, #0457ea 20px, #0a63fb 26px, #0542c8); }
.dlg-title h2 { flex: 1; font: bold 13px/20px var(--mono); color: #fff; text-shadow: 1px 1px #0a2a80; }
.dlg-cap { width: 21px; height: 21px; border-color: #fff; background: linear-gradient(135deg, #6f9cf8, #2357dc); }
.dlg-cap svg { width: 19px; height: 19px; }
.dlg-close { background: linear-gradient(135deg, #ee8a6c, #cf3a18); }
.dlg-body { padding: 26px 13px 11px 13px; background: linear-gradient(#fefefe, #f1f1ee 50%, #efefe9); border-right: 1px solid #b8b8b0; border-bottom: 1px solid #b8b8b0; }
.visual { display: grid; grid-template-columns: 117px 236px 1fr; padding-left: 6px; font-weight: bold; font-size: 12px; color: #6e6e69; }
.vleft { padding-top: 3px; }
.vrow { display: flex; align-items: center; justify-content: space-between; width: 111px; height: 24px; margin-bottom: 3px; white-space: nowrap; }
.vrow.spaced { margin-top: 15px; }
.vrow .val { width: 45px; }
.swatch { width: 48px; height: 20px; border: 1px solid #d0c0b0; }
.change { width: 47px; height: 22px; color: #000; font-size: 11px; font-weight: normal; }
.val { font-weight: normal; font-size: 11px; color: #000080; text-decoration: none; }
.diagram { width: 236px; height: 130px; }
.clk { font: 28px "Liberation Sans", sans-serif; fill: #4f90a0; }
.border-row { display: flex; align-items: center; gap: 5px; padding-left: 52px; margin-top: -3px; }
.vright { padding: 5px 0 0 6px; }
.prop { display: flex; align-items: center; gap: 8px; height: 25px; }
.props { margin: 29px 0 11px; padding: 6px 20px 5px; border: 1px solid #d2d2c8; border-radius: 4px; }
.props legend { margin-left: -13px; padding: 0 3px; color: #0a3cae; line-height: 14px; }
.grid { display: grid; grid-template-columns: 88px 124px 39px 76px 125px; grid-auto-rows: 33px; align-items: center; }
.grid label { font-weight: bold; font-size: 12px; color: #6e6e69; }
.grid label[for="pos"], .grid label[for="io"], .grid label[for="locked"] { grid-column: 4; }
.combo, .field { height: 21px; border: 1px solid #7f9db9; background: #fff; }
.combo { display: flex; padding: 1px; }
.combo input { flex: 1; min-width: 0; padding-left: 1px; }
.combo input::selection { background: #316ac5; color: #fff; }
.combo button { width: 16px; display: grid; place-items: center; border-radius: 1px; background: #c3d2f8; }
.combo svg { width: 10px; height: 10px; }
.field { padding-left: 2px; }
.io { background: #fff var(--chevron) no-repeat right 1px center; }
.dlg-actions { display: flex; justify-content: flex-end; gap: 8px; }
.dlg-actions .xp-btn { width: 73px; height: 23px; }
.dlg-actions .default { box-shadow: inset 0 0 0 2px #a5bff0; }
.pointer { position: absolute; left: 501px; top: 270px; width: 14px; height: 22px; }
```
